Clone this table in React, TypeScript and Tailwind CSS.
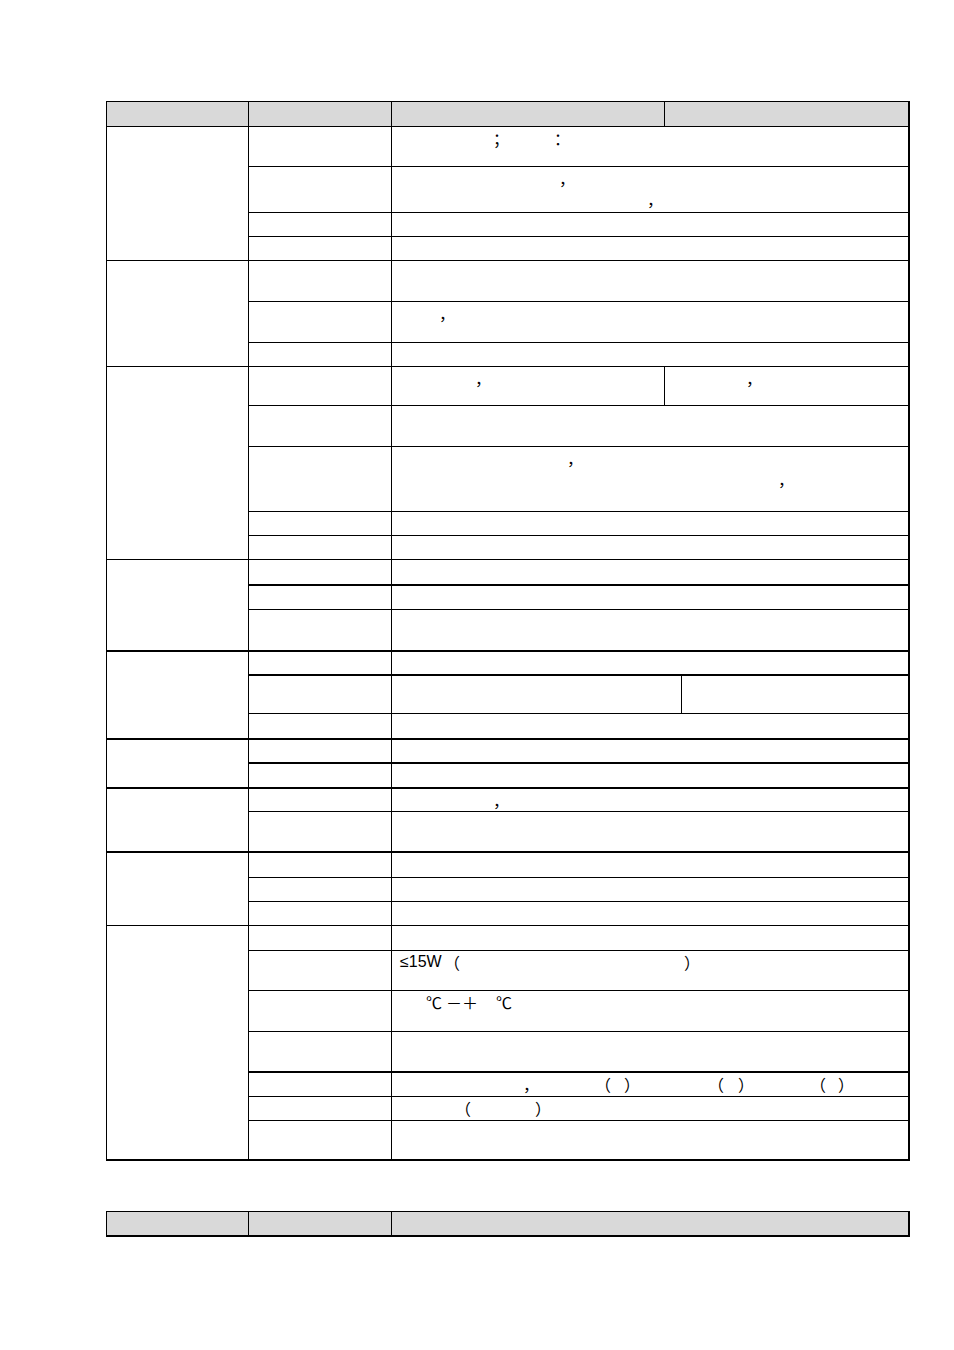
import type { ReactNode } from 'react';

// fullwidth glyph box, 1em wide in the CJK face
const G = ({ c }: { c: string }) => <span className="w-[16px] shrink-0">{c}</span>;

const Line = ({ children }: { children?: ReactNode }) => (
  <div className="flex h-[21px] items-center whitespace-pre">{children}</div>
);

type Row = {
  h: string;
  thick?: boolean;
  body?: ReactNode;
  split?: { w: string; a?: ReactNode; b?: ReactNode };
};

type Group = { thick?: boolean; rows: Row[] };

const groups: Group[] = [
  {
    rows: [
      {
        h: 'h-[40px]',
        body: (
          <Line>
            <span className="w-[93px] shrink-0" />
            <G c="；" />
            <span className="w-[45px] shrink-0" />
            <G c="：" />
          </Line>
        ),
      },
      {
        h: 'h-[46px]',
        body: (
          <>
            <Line>
              <span className="w-[159px] shrink-0" />
              <G c="，" />
            </Line>
            <Line>
              <span className="w-[247px] shrink-0" />
              <G c="，" />
            </Line>
          </>
        ),
      },
      { h: 'h-[24px]' },
      { h: 'h-[24px]' },
    ],
  },
  {
    rows: [
      { h: 'h-[41px]' },
      {
        h: 'h-[41px]',
        body: (
          <Line>
            <span className="w-[39px] shrink-0" />
            <G c="，" />
          </Line>
        ),
      },
      { h: 'h-[24px]' },
    ],
  },
  {
    rows: [
      {
        h: 'h-[39px]',
        split: {
          w: 'w-[273px]',
          a: (
            <Line>
              <span className="w-[75px] shrink-0" />
              <G c="，" />
            </Line>
          ),
          b: (
            <Line>
              <span className="w-[73px] shrink-0" />
              <G c="，" />
            </Line>
          ),
        },
      },
      { h: 'h-[41px]' },
      {
        h: 'h-[65px]',
        body: (
          <>
            <Line>
              <span className="w-[167px] shrink-0" />
              <G c="，" />
            </Line>
            <Line>
              <span className="w-[378px] shrink-0" />
              <G c="，" />
            </Line>
          </>
        ),
      },
      { h: 'h-[24px]' },
      { h: 'h-[24px]' },
    ],
  },
  {
    rows: [{ h: 'h-[25px]' }, { h: 'h-[25px]', thick: true }, { h: 'h-[41px]' }],
  },
  {
    thick: true,
    rows: [{ h: 'h-[24px]' }, { h: 'h-[39px]', thick: true, split: { w: 'w-[290px]' } }, { h: 'h-[25px]' }],
  },
  {
    thick: true,
    rows: [{ h: 'h-[24px]' }, { h: 'h-[25px]', thick: true }],
  },
  {
    thick: true,
    rows: [
      {
        h: 'h-[24px]',
        body: (
          <Line>
            <span className="w-[93px] shrink-0" />
            <G c="，" />
          </Line>
        ),
      },
      { h: 'h-[40px]' },
    ],
  },
  {
    thick: true,
    rows: [{ h: 'h-[26px]' }, { h: 'h-[24px]' }, { h: 'h-[24px]' }],
  },
  {
    rows: [
      { h: 'h-[25px]' },
      {
        h: 'h-[40px]',
        body: (
          <Line>
            <span className="w-[44px] shrink-0 font-['Liberation_Sans',sans-serif]">≤15W</span>
            <G c="（" />
            <span className="w-[224px] shrink-0" />
            <G c="）" />
          </Line>
        ),
      },
      {
        h: 'h-[41px]',
        body: (
          <Line>
            <span className="w-[26px] shrink-0" />
            <G c="℃" />
            <span className="w-[4px] shrink-0" />
            <G c="－" />
            <G c="＋" />
            <span className="w-[18px] shrink-0" />
            <G c="℃" />
          </Line>
        ),
      },
      { h: 'h-[40px]' },
      {
        h: 'h-[25px]',
        thick: true,
        body: (
          <Line>
            <span className="w-[123px] shrink-0" />
            <G c="，" />
            <span className="w-[56px] shrink-0" />
            <G c="（" />
            <span className="w-[13px] shrink-0" />
            <G c="）" />
            <span className="w-[68px] shrink-0" />
            <G c="（" />
            <span className="w-[14px] shrink-0" />
            <G c="）" />
            <span className="w-[56px] shrink-0" />
            <G c="（" />
            <span className="w-[12px] shrink-0" />
            <G c="）" />
          </Line>
        ),
      },
      {
        h: 'h-[24px]',
        body: (
          <Line>
            <span className="w-[55px] shrink-0" />
            <G c="（" />
            <span className="w-[64px] shrink-0" />
            <G c="）" />
          </Line>
        ),
      },
      { h: 'h-[39px]' },
    ],
  },
];

function GroupBlock({ group }: { group: Group }) {
  return (
    <div className="flex">
      <div
        className={`w-[142px] shrink-0 border-l border-black ${group.thick ? 'border-t-2' : 'border-t'}`}
      />
      <div className="flex flex-1 flex-col">
        {group.rows.map((row, i) => {
          const top = row.thick || (i === 0 && group.thick) ? 'border-t-2' : 'border-t';
          return (
            <div key={i} className={`flex ${row.h}`}>
              <div className={`w-[143px] shrink-0 border-l border-black ${top}`} />
              {row.split ? (
                <>
                  <div className={`${row.split.w} shrink-0 border-l border-black pl-[8px] ${top}`}>
                    {row.split.a}
                  </div>
                  <div className={`flex-1 border-l border-black pl-[8px] ${top}`}>{row.split.b}</div>
                </>
              ) : (
                <div className={`flex-1 border-l border-black pl-[8px] ${top}`}>{row.body}</div>
              )}
            </div>
          );
        })}
      </div>
    </div>
  );
}

export default function App() {
  return (
    <div className="min-h-[1350px] bg-white text-[16px] text-black font-['Noto_Sans_CJK_SC','Noto_Sans',sans-serif]">
      <div className="h-[101px]" />
      <div className="ml-[106px] w-[804px] border-b-2 border-r-2 border-black">
        <div className="flex h-[25px] bg-[#d9d9d9]">
          <div className="w-[142px] shrink-0 border-l border-t border-black" />
          <div className="w-[143px] shrink-0 border-l border-t border-black" />
          <div className="w-[273px] shrink-0 border-l border-t border-black" />
          <div className="flex-1 border-l border-t border-black" />
        </div>
        {groups.map((g, i) => (
          <GroupBlock key={i} group={g} />
        ))}
      </div>

      <div className="ml-[106px] mt-[50px] flex h-[26px] w-[804px] border-b-2 border-r-2 border-black bg-[#d9d9d9]">
        <div className="w-[142px] shrink-0 border-l border-t border-black" />
        <div className="w-[143px] shrink-0 border-l border-t border-black" />
        <div className="flex-1 border-l border-t border-black" />
      </div>
    </div>
  );
}
